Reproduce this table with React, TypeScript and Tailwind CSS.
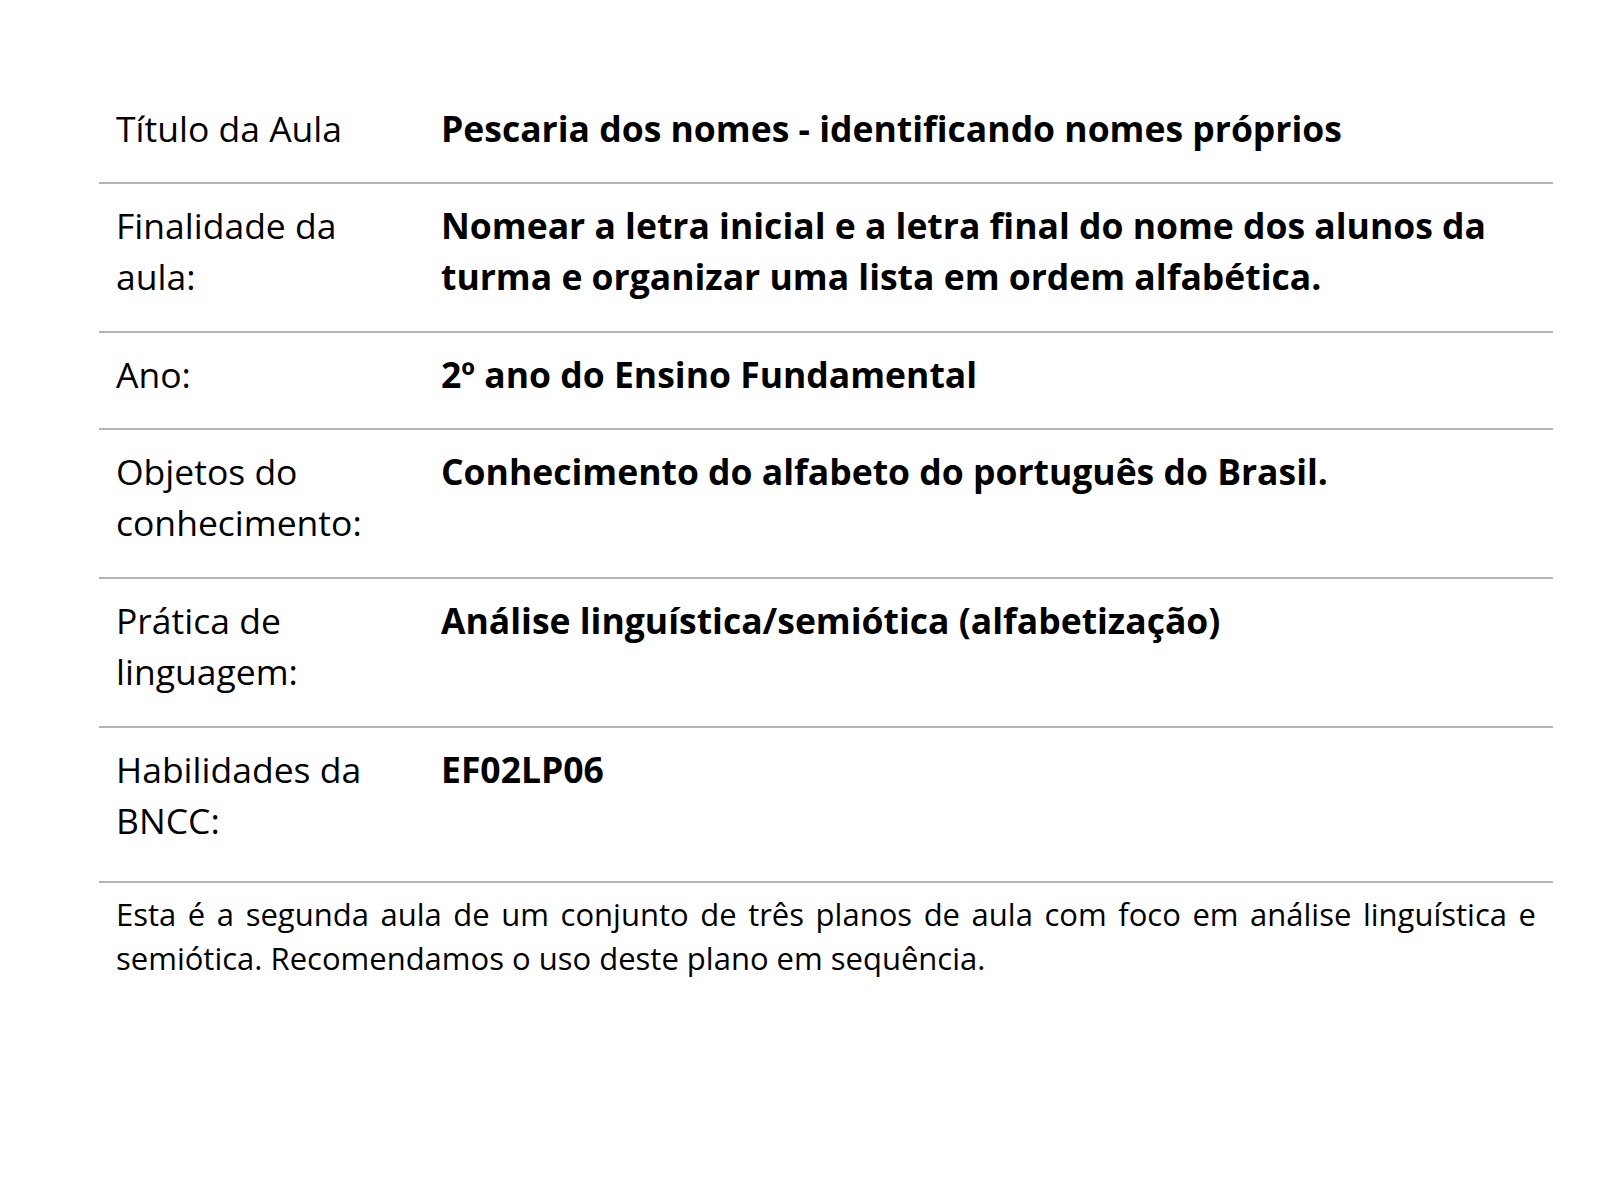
import React from "react";

const rows: { label: React.ReactNode; value: React.ReactNode; pb: string }[] = [
  { label: "Título da Aula", value: "Pescaria dos nomes - identificando nomes próprios", pb: "pb-[28px]" },
  {
    label: "Finalidade da aula:",
    value:
      "Nomear a letra inicial e a letra final do nome dos alunos da turma e organizar uma lista em ordem alfabética.",
    pb: "pb-[29px]",
  },
  { label: "Ano:", value: "2º ano do Ensino Fundamental", pb: "pb-[28px]" },
  { label: "Objetos do conhecimento:", value: "Conhecimento do alfabeto do português do Brasil.", pb: "pb-[29px]" },
  { label: "Prática de linguagem:", value: "Análise linguística/semiótica (alfabetização)", pb: "pb-[29px]" },
  { label: "Habilidades da BNCC:", value: "EF02LP06", pb: "pb-[35px]" },
];

export default function App() {
  return (
    <div
      className="min-h-[1200px] w-[1600px] bg-white text-black"
      style={{ fontFamily: '"Open Sans", "Noto Sans", sans-serif' }}
    >
      <div className="ml-[99px] w-[1454px] pt-[87px]">
        {rows.map((r, i) => (
          <div key={i} className={`flex border-b-2 border-[#b4b4b4] pt-4 ${r.pb}`}>
            <div className="w-[325px] shrink-0 pl-[17px] pr-4 text-[35.5px] leading-[51px]">{r.label}</div>
            <div className="flex-1 pl-[17px] pr-4 text-[35.5px] font-bold leading-[51px]">{r.value}</div>
          </div>
        ))}
        <p className="mt-[9px] px-[17px] text-justify text-[31px] leading-[44px]">
          Esta é a segunda aula de um conjunto de três planos de aula com foco em análise linguística e
          semiótica. Recomendamos o uso deste plano em sequência.
        </p>
      </div>
    </div>
  );
}
